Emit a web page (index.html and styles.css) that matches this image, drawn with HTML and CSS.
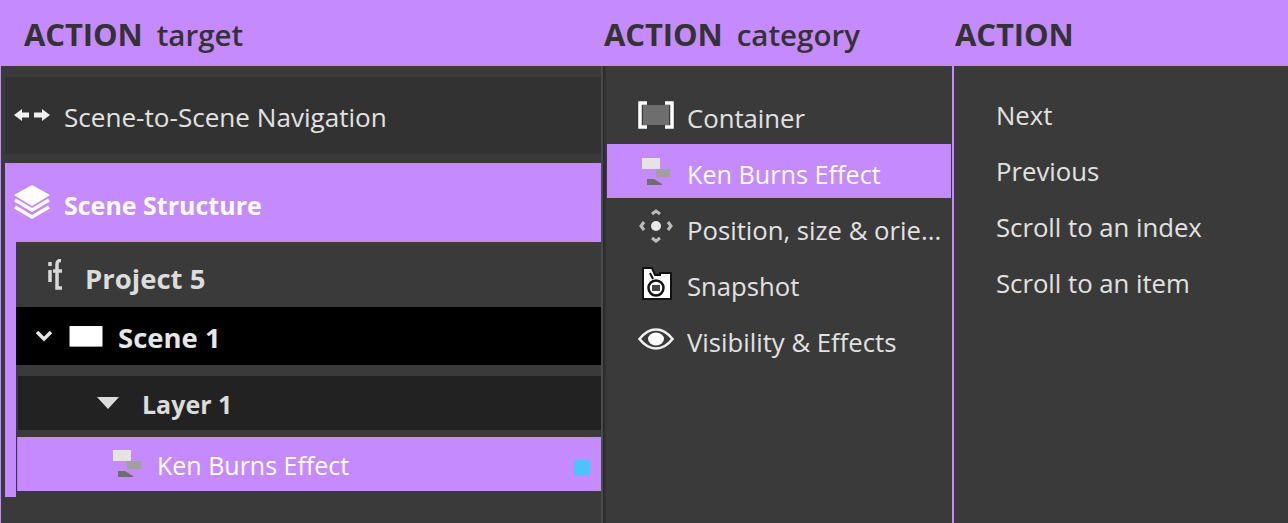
FILE: index.html
```
<!DOCTYPE html>
<html lang="en">
<head>
<meta charset="utf-8">
<title>Action picker</title>
<link rel="stylesheet" href="styles.css">
</head>
<body>
<div class="app">
  <header class="head">
    <div class="head-cell head-1"><b>ACTION</b><span>target</span></div>
    <div class="head-cell head-2"><b>ACTION</b><span>category</span></div>
    <div class="head-cell head-3"><b>ACTION</b></div>
  </header>
  <main class="cols">
    <section class="col-target">
      <div class="nav-row">
        <svg class="ic ic-nav" viewBox="0 0 36 16"><path class="soft" fill="#f2f2f2" d="M0 8l8-6v3.500h7v5H8V14zM36 8l-8-6v3.500h-8v5h8V14z"/></svg>
        <span>Scene-to-Scene Navigation</span>
      </div>
      <div class="struct">
        <div class="struct-head">
          <svg class="ic ic-nav" viewBox="0 0 36 34"><path class="soft" fill="#fff" d="M18 0L36 10 18 21 0 10z"/><path class="soft" fill="none" stroke="#fff" stroke-width="3.500" d="M1 15l17 10 17-10M1 22l17 10 17-10"/></svg>
          <span>Scene Structure</span>
        </div>
        <div class="tree">
          <div class="project">
            <svg class="ic ic-if" viewBox="0 0 16 32"><path class="soft" fill="none" stroke="#d8d8d8" stroke-width="3.500" d="M3 11v12M3 3v4M14 1.500c-3 0-4 1-4 4V29h5M6 12h9"/></svg>
            <span>Project 5</span>
          </div>
          <div class="scene">
            <svg class="ic ic-chev" viewBox="0 0 18 12"><path fill="none" stroke="#e6e6e6" stroke-width="3.400" d="M2 2l7 7 7-7"/></svg>
            <svg class="ic ic-frame" viewBox="0 0 33 22"><rect class="soft" width="32" height="20" x=".5" y="1" fill="#fff"/></svg>
            <span>Scene 1</span>
          </div>
          <div class="layer">
            <svg class="ic ic-tri" viewBox="0 0 22 12"><path fill="#dcdcdc" d="M0 0h22L11 12z"/></svg>
            <span>Layer 1</span>
          </div>
          <div class="item">
            <svg class="ic ic-ken" viewBox="0 0 28 28"><g class="soft"><rect x="0" y="0" width="18" height="11" fill="#e4e4e4"/><rect x="14" y="11" width="14" height="8" fill="#a0a0a0"/><path fill="#6e6e6e" d="M5 21h7l8 5v1H5z"/></g></svg>
            <span>Ken Burns Effect</span>
            <i class="dot"></i>
          </div>
        </div>
      </div>
    </section>
    <div class="divider"></div>
    <section class="col-cat">
      <div class="cat-row">
        <svg class="ic ic-cat" viewBox="0 0 36 28"><rect x="5" y="4" width="26" height="20" fill="#6e6e6e"/><path fill="none" stroke="#fff" stroke-width="3.500" d="M9 2H2v24h7M27 2h7v24h-7"/></svg>
        <span>Container</span>
      </div>
      <div class="cat-row is-on">
        <svg class="ic ic-cat ic-cat-ken" viewBox="0 0 28 28"><g class="soft"><rect x="0" y="0" width="18" height="11" fill="#e4e4e4"/><rect x="14" y="11" width="14" height="8" fill="#a0a0a0"/><path fill="#6e6e6e" d="M5 21h7l8 5v1H5z"/></g></svg>
        <span>Ken Burns Effect</span>
      </div>
      <div class="cat-row">
        <svg class="ic ic-cat ic-cat-pos" viewBox="0 0 36 36"><g class="soft" fill="none" stroke="#bdbdbd" stroke-width="3"><path d="M14 6l4-3 4 3M14 30l4 3 4-3M6 14l-3 4 3 4M30 14l3 4-3 4"/></g><circle class="soft" cx="18" cy="18" r="5" fill="#e8e8e8"/></svg>
        <span>Position, size &amp; orie...</span>
      </div>
      <div class="cat-row">
        <svg class="ic ic-cat ic-cat-snap" viewBox="0 0 32 33"><path fill="#fff" stroke="#111" stroke-width="2" d="M2 1h9l3 7h5V6h11v26H2z"/><circle cx="15" cy="21" r="7.500" fill="#fff" stroke="#111" stroke-width="2.500"/><rect x="11" y="18" width="8" height="6" fill="#444"/><path fill="none" stroke="#111" stroke-width="2" d="M9 6l3 6"/></svg>
        <span>Snapshot</span>
      </div>
      <div class="cat-row">
        <svg class="ic ic-cat" viewBox="0 0 36 22"><path fill="none" stroke="#f2f2f2" stroke-width="2.600" d="M1.500 11C7 4 12 1.500 18 1.500S29 4 34.500 11C29 18 24 20.500 18 20.500S7 18 1.500 11z"/><ellipse cx="18" cy="11" rx="8" ry="6.500" fill="#fff"/></svg>
        <span>Visibility &amp; Effects</span>
      </div>
    </section>
    <section class="col-action">
      <div class="act-row">Next</div>
      <div class="act-row">Previous</div>
      <div class="act-row">Scroll to an index</div>
      <div class="act-row">Scroll to an item</div>
    </section>
  </main>
</div>
</body>
</html>
```
FILE: styles.css
```
* { box-sizing: border-box; }
html, body { margin: 0; height: 100%; }
body {
  background: #3a3a3a;
  color: #e2e2e2;
  font-family: "Open Sans", "Noto Sans", "Liberation Sans", sans-serif;
  font-size: 26px;
  overflow: hidden;
}
.app { display: flex; flex-direction: column; width: 1288px; height: 523px; }
.ic { display: block; flex: none; }
.soft { filter: blur(.4px); }

.head { display: flex; height: 66px; background: #c68aff; color: #333; flex: none; }
.head-cell { display: flex; align-items: baseline; padding-top: 12px; font-size: 31px; line-height: 44px; }
.head-cell b { font-weight: 700; letter-spacing: -.1px; }
.head-cell span { font-size: 29.500px; font-weight: 600; margin-left: 14px; }
.head-1 { width: 604px; padding-left: 24px; }
.head-2 { width: 351px; }
.head-3 { flex: 1; }

.cols { display: flex; flex: 1; min-height: 0; }
.col-target { width: 601px; flex: none; padding: 11px 0 0 4px; border-left: 1px solid #c68aff; }
.nav-row { display: flex; align-items: center; height: 77px; background: #323232; padding-left: 9px; gap: 14px; font-size: 26.100px; }
.nav-row span { padding-top: 3px; }
.nav-row .ic-nav { margin-bottom: 2px; }
.ic-nav { width: 36px; }
.struct { margin-top: 9px; background: #c68aff; width: 596px; height: 334px; }
.struct-head { display: flex; align-items: center; height: 79px; padding-left: 9px; gap: 14px; color: #fff; font-weight: 700; font-size: 25px; }
.struct-head span { padding-top: 4px; }
.struct-head .ic-nav { margin-bottom: 2px; }
.tree { margin-left: 11px; background: #3a3a3a; height: 255px; }
.project { display: flex; align-items: center; height: 65px; padding-left: 31px; font-weight: 700; font-size: 27.500px; color: #dcdcdc; }
.project span { padding-top: 8px; margin-left: -1px; }
.ic-if { width: 16px; height: 32px; margin-right: 23px; }
.scene { display: flex; align-items: center; height: 58px; background: #000; padding-left: 19px; font-weight: 700; font-size: 27.500px; color: #e6e6e6; }
.scene span { padding-top: 2px; margin-left: -1px; }
.ic-chev { width: 18px; margin-right: 16px; }
.ic-frame { width: 34px; margin-right: 16px; }
.layer { display: flex; align-items: center; height: 54px; margin: 11px 0 7px 2px; background: #222; padding-left: 79px; font-weight: 700; font-size: 25px; color: #dcdcdc; }
.layer span { padding-top: 2px; }
.ic-tri { width: 22px; margin-right: 23px; }
.item { display: flex; align-items: center; height: 54px; margin-left: 1px; background: #c68aff; padding-left: 95px; color: #fff; font-size: 25px; border-left: 1px solid #b27ce6; }
.item > span { padding-top: 2px; margin-left: -2px; }
.item .ic-ken { width: 28px; margin-right: 18px; }
.dot { width: 16px; height: 16px; border-radius: 2px; background: #4dc3fb; margin: 8px 11px 0 auto; }

.divider { width: 6px; flex: none; background: linear-gradient(90deg, #4a4a4a 0 2px, #2a2a2a 2px 3px, #333 4px, #3a3a3a); }
.col-cat { width: 345px; flex: none; padding-top: 22px; display: flex; flex-direction: column; gap: 2px; }
.cat-row { display: flex; align-items: center; height: 54px; width: 344px; padding-left: 31px; font-size: 25.700px; white-space: nowrap; }
.cat-row > span { padding-top: 6px; }
.cat-row.is-on { background: #c68aff; color: #fff; }
.cat-row.is-on > span { font-size: 25.200px; }
.ic-cat { width: 36px; margin-right: 13px; }
.ic-cat-ken { width: 28px; margin: 2px 17px 0 4px; }
.ic-cat-pos { margin-bottom: 2px; }
.ic-cat-snap { width: 32px; margin: 1px 14px 0 3px; }
.col-action { flex: 1; border-left: 2px solid #c68aff; padding-top: 22px; padding-left: 42px; display: flex; flex-direction: column; }
.act-row { height: 56px; line-height: 56px; font-size: 25.700px; }
```
